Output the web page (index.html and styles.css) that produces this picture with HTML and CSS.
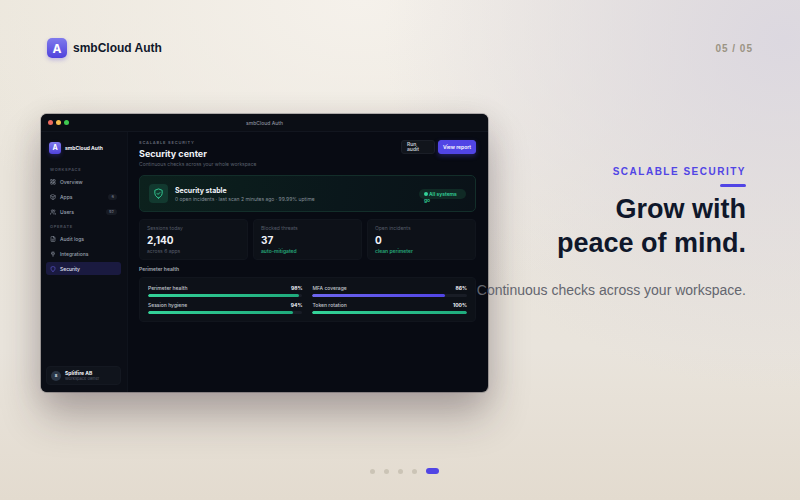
FILE: index.html
```
<!DOCTYPE html>
<html lang="en">
  <head>
    <meta charset="UTF-8">
    <meta name="viewport" content="width=device-width, initial-scale=1">
    <title>smbCloud Auth - Scalable Security</title>
    <link rel="stylesheet" href="styles.css">
  </head>
  <body>
    <header class="top">
      <div class="brand">
        <span class="logo">A</span>
        <span>smbCloud Auth</span>
      </div>
      <span class="counter">05 / 05</span>
    </header>

    <main class="slide">
      <div class="window">
        <div class="titlebar">
          <div class="lights">
            <span class="light red"></span>
            <span class="light yellow"></span>
            <span class="light green"></span>
          </div>
          <span class="window-title">smbCloud Auth</span>
        </div>

        <div class="app">
          <!-- Sidebar -->
          <aside class="sidebar">
            <div class="app-brand">
              <span class="logo logo-small">A</span>
              <span>smbCloud Auth</span>
            </div>

            <nav>
              <h4>Workspace</h4>
              <a href="#overview">
                <svg viewBox="0 0 24 24"><rect x="3" y="3" width="7" height="7" rx="1"/><rect x="14" y="3" width="7" height="7" rx="1"/><rect x="3" y="14" width="7" height="7" rx="1"/><rect x="14" y="14" width="7" height="7" rx="1"/></svg>
                Overview
              </a>
              <a href="#apps">
                <svg viewBox="0 0 24 24"><path d="M12 2l9 5v10l-9 5-9-5V7z"/><path d="M3 7l9 5 9-5M12 12v10"/></svg>
                Apps
                <span class="count">6</span>
              </a>
              <a href="#users">
                <svg viewBox="0 0 24 24"><circle cx="9" cy="7" r="4"/><path d="M2 21v-2a4 4 0 0 1 4-4h6a4 4 0 0 1 4 4v2M16 3a4 4 0 0 1 0 8M22 21v-2a4 4 0 0 0-3-4"/></svg>
                Users
                <span class="count">92</span>
              </a>

              <h4>Operate</h4>
              <a href="#logs">
                <svg viewBox="0 0 24 24"><path d="M14 2H6a2 2 0 0 0-2 2v16a2 2 0 0 0 2 2h12a2 2 0 0 0 2-2V8z"/><path d="M14 2v6h6M8 13h8M8 17h6"/></svg>
                Audit logs
              </a>
              <a href="#integrations">
                <svg viewBox="0 0 24 24"><path d="M12 22v-7M9 8V3M15 8V3M6 8h12v2a6 6 0 0 1-12 0z"/></svg>
                Integrations
              </a>
              <a href="#security" class="active">
                <svg viewBox="0 0 24 24"><path d="M12 22s8-4 8-10V5l-8-3-8 3v7c0 6 8 10 8 10z"/></svg>
                Security
              </a>
            </nav>

            <div class="account">
              <span class="avatar">S</span>
              <div>
                <strong>Splitfire AB</strong>
                <small>Workspace owner</small>
              </div>
            </div>
          </aside>

          <!-- Security center -->
          <section class="content">
            <div class="content-head">
              <div>
                <p class="kicker">Scalable security</p>
                <h2>Security center</h2>
                <p class="muted">Continuous checks across your whole workspace</p>
              </div>
              <div class="actions">
                <button type="button" class="btn">Run audit</button>
                <button type="button" class="btn btn-primary">View report</button>
              </div>
            </div>

            <div class="status">
              <span class="status-icon">
                <svg viewBox="0 0 24 24"><path d="M12 22s8-4 8-10V5l-8-3-8 3v7c0 6 8 10 8 10z"/><path d="M9 12l2 2 4-4"/></svg>
              </span>
              <div>
                <h3>Security stable</h3>
                <p>0 open incidents · last scan 2 minutes ago · 99.99% uptime</p>
              </div>
              <div class="pill"><i></i>All systems go</div>
            </div>

            <div class="stats">
              <div class="card">
                <p class="label">Sessions today</p>
                <p class="value">2,140</p>
                <p class="note">across 6 apps</p>
              </div>
              <div class="card">
                <p class="label">Blocked threats</p>
                <p class="value">37</p>
                <p class="note good">auto-mitigated</p>
              </div>
              <div class="card">
                <p class="label">Open incidents</p>
                <p class="value">0</p>
                <p class="note good">clean perimeter</p>
              </div>
            </div>

            <h4 class="section-title">Perimeter health</h4>
            <div class="card meters">
              <div class="meter">
                <p><span>Perimeter health</span><b>98%</b></p>
                <div class="track"><div class="fill" style="width: 98%"></div></div>
              </div>
              <div class="meter">
                <p><span>MFA coverage</span><b>86%</b></p>
                <div class="track"><div class="fill violet" style="width: 86%"></div></div>
              </div>
              <div class="meter">
                <p><span>Session hygiene</span><b>94%</b></p>
                <div class="track"><div class="fill" style="width: 94%"></div></div>
              </div>
              <div class="meter">
                <p><span>Token rotation</span><b>100%</b></p>
                <div class="track"><div class="fill" style="width: 100%"></div></div>
              </div>
            </div>
          </section>
        </div>
      </div>

      <div class="caption">
        <p class="eyebrow">Scalable security</p>
        <span class="rule"></span>
        <h1>Grow with<br>peace of mind.</h1>
        <p class="lead">Continuous checks across your workspace.</p>
      </div>
    </main>

    <footer class="dots">
      <span></span>
      <span></span>
      <span></span>
      <span></span>
      <span class="current"></span>
    </footer>
  </body>
</html>
```
FILE: styles.css
```
* {
  box-sizing: border-box;
}

h1, h2, h3, h4, p {
  margin: 0;
}

body {
  margin: 0;
  min-height: 100vh;
  display: flex;
  flex-direction: column;
  color: #0f172a;
  font-family: "Liberation Sans", Arial, sans-serif;
  background:
    radial-gradient(ellipse 50% 70% at 98% 8%, #dcd8e0, rgba(220, 216, 224, 0) 100%),
    radial-gradient(ellipse 55% 60% at 45% 0%, #f5f1eb, rgba(245, 241, 235, 0) 100%),
    linear-gradient(180deg, #ebe6db 0%, #e9e4dc 70%, #e3dbcf 100%);
}

/* Header */
.top {
  display: flex;
  align-items: center;
  justify-content: space-between;
  padding: 38px 47px 0;
}

.brand {
  display: flex;
  align-items: center;
  gap: 6px;
  font-size: 12px;
  font-weight: bold;
}

.logo {
  display: flex;
  align-items: center;
  justify-content: center;
  width: 20px;
  height: 20px;
  border-radius: 5px;
  color: #fff;
  font-family: Inter, sans-serif;
  font-size: 12px;
  font-weight: bold;
  background: linear-gradient(180deg, #7f7aec, #4f42dc);
  box-shadow: 0 2px 4px rgba(79, 66, 220, 0.3);
}

.logo-small {
  width: 12px;
  height: 12px;
  border-radius: 3px;
  font-size: 7px;
}

.counter {
  color: #9b9484;
  font-size: 10px;
  font-weight: bold;
  letter-spacing: 0.1em;
}

/* Slide */
.slide {
  display: flex;
  align-items: flex-start;
  margin-top: 56px;
  padding: 0 54px 0 41px;
}

.window {
  flex: 0 0 63.4%;
  display: flex;
  flex-direction: column;
  min-height: 278px;
  overflow: hidden;
  border-radius: 6px;
  background: #080b13;
  color: #f1f3f8;
  font-family: Inter, sans-serif;
  font-size: 5px;
  line-height: 6px;
  box-shadow: 0 0 0 1px rgba(20, 20, 30, 0.25), 0 24px 40px rgba(45, 30, 40, 0.3), 0 4px 30px rgba(45, 30, 40, 0.1);
}

.titlebar {
  display: grid;
  grid-template-columns: 1fr auto 1fr;
  align-items: center;
  height: 18px;
  padding: 0 7px;
  border-bottom: 1px solid #12161f;
  background: #0b0e15;
}

.lights {
  display: flex;
  gap: 3px;
}

.light {
  width: 5px;
  height: 5px;
  border-radius: 50%;
}

.red {
  background: #ed6a5e;
}

.yellow {
  background: #f5bf4f;
}

.green {
  background: #3fc950;
}

.window-title {
  color: #8b909b;
  font-weight: 500;
}

.app {
  flex: 1;
  display: flex;
}

/* Sidebar */
.sidebar {
  flex: 0 0 87px;
  display: flex;
  flex-direction: column;
  padding: 10px 6px 7px 5px;
  border-right: 1px solid #0f131c;
  background: #0b0e16;
}

.app-brand {
  display: flex;
  align-items: center;
  gap: 4px;
  padding-left: 3px;
  font-weight: bold;
}

nav {
  display: flex;
  flex-direction: column;
  gap: 2px;
  margin-top: 13px;
}

nav h4 {
  padding: 0 4px;
  color: #4b515e;
  font-size: 4px;
  font-weight: 600;
  letter-spacing: 0.16em;
  text-transform: uppercase;
}

nav a + h4 {
  margin-top: 4px;
}

nav a {
  display: flex;
  align-items: center;
  gap: 4px;
  height: 13px;
  padding: 0 4px;
  border-radius: 3px;
  color: #9aa1af;
  font-weight: 500;
  text-decoration: none;
}

svg {
  width: 6px;
  height: 6px;
  fill: none;
  stroke: currentColor;
  stroke-width: 2;
  stroke-linecap: round;
  stroke-linejoin: round;
}

nav a.active {
  background: #1a1a40;
  color: #e3e5f5;
}

nav a.active svg {
  color: #6d66ee;
}

.count {
  margin-left: auto;
  padding: 0 3px;
  border-radius: 3px;
  background: #171b24;
  color: #6c7280;
  font-size: 4px;
}

.account {
  display: flex;
  align-items: center;
  gap: 4px;
  height: 19px;
  margin-top: auto;
  padding: 0 4px;
  border: 1px solid #141821;
  border-radius: 4px;
  background: #10141c;
}

.avatar {
  width: 10px;
  height: 10px;
  border-radius: 50%;
  background: #2b3646;
  color: #dfe4ec;
  font-size: 4px;
  font-weight: bold;
  line-height: 10px;
  text-align: center;
}

.account strong,
.account small {
  display: block;
  line-height: 5px;
}

.account small {
  color: #565c69;
  font-size: 4px;
}

/* Main panel */
.content {
  flex: 1;
  padding: 8px 12px 12px 11px;
}

.content-head {
  display: flex;
  justify-content: space-between;
  align-items: flex-start;
}

.kicker {
  color: #646a77;
  font-size: 4px;
  font-weight: 600;
  letter-spacing: 0.2em;
  text-transform: uppercase;
}

.content h2 {
  margin: 2px 0 1px;
  font-size: 9px;
  line-height: 12px;
}

.muted {
  color: #5a606d;
}

.actions {
  display: flex;
  gap: 3px;
}

.btn {
  width: 34px;
  height: 14px;
  padding: 0 12px 0 5px;
  border: 1px solid #1a1e27;
  border-radius: 3px;
  background: #11151c;
  color: #c5c9d2;
  font-family: inherit;
  font-size: 5px;
  font-weight: 600;
  line-height: 5px;
  text-align: left;
  cursor: pointer;
}

.btn-primary {
  width: 38px;
  padding: 0;
  border-color: #5145e5;
  background: #5145e5;
  color: #fff;
  text-align: center;
  white-space: nowrap;
  box-shadow: 0 2px 5px rgba(81, 69, 229, 0.35);
}

.status {
  display: flex;
  align-items: center;
  gap: 7px;
  height: 37px;
  margin-top: 8px;
  padding: 0 9px;
  border: 1px solid #132e2a;
  border-radius: 5px;
  background: linear-gradient(100deg, #0c211d, #0a171b 60%, #0a1218);
}

.status-icon {
  display: flex;
  align-items: center;
  justify-content: center;
  width: 19px;
  height: 19px;
  border-radius: 4px;
  background: #12392f;
  color: #34d399;
}

.status-icon svg {
  width: 11px;
  height: 11px;
}

.status h3 {
  font-size: 7px;
  line-height: 10px;
}

.status p {
  color: #858f98;
}

.pill {
  width: 47px;
  height: 10px;
  margin-left: auto;
  padding: 2px 5px;
  border-radius: 5px;
  background: #102a25;
  color: #34d399;
  font-weight: 600;
}

.pill i {
  display: inline-block;
  width: 4px;
  height: 4px;
  margin-right: 1px;
  border-radius: 50%;
  background: #34d399;
}

.card {
  border: 1px solid #11151d;
  border-radius: 4px;
  background: #0d1118;
}

.stats {
  display: grid;
  grid-template-columns: repeat(3, 1fr);
  gap: 5px;
  margin-top: 7px;
}

.stats .card {
  padding: 5px 7px;
}

.label,
.note {
  color: #565c69;
}

.value {
  margin: 3px 0 2px;
  font-size: 10px;
  font-weight: bold;
  line-height: 12px;
}

.good {
  color: #26a678;
  font-weight: 600;
}

.section-title {
  margin: 6px 0 5px;
  color: #a6abb6;
  font-weight: 600;
}

.meters {
  display: grid;
  grid-template-columns: 1fr 1fr;
  gap: 5px 10px;
  padding: 7px 8px;
}

.meter p {
  display: flex;
  justify-content: space-between;
  margin-bottom: 3px;
  color: #c3c7d0;
  font-weight: 500;
}

.meter b {
  color: #f1f3f8;
}

.track {
  height: 3px;
  overflow: hidden;
  border-radius: 2px;
  background: #191d26;
}

.fill {
  height: 100%;
  border-radius: 2px;
  background: linear-gradient(90deg, #34d399, #1fab7c);
}

.violet {
  background: linear-gradient(90deg, #6d66ee, #5145e5);
}

/* Caption next to the window */
.caption {
  position: relative;
  flex: 1;
  display: flex;
  flex-direction: column;
  align-items: flex-end;
  min-width: 0;
  padding-top: 51px;
  text-align: right;
}

.eyebrow {
  color: #5145e5;
  font-size: 10px;
  font-weight: bold;
  line-height: 14px;
  letter-spacing: 0.15em;
  text-transform: uppercase;
}

.rule {
  width: 26px;
  height: 3px;
  margin: 5px 0;
  border-radius: 2px;
  background: #5145e5;
}

h1 {
  font-size: 27px;
  line-height: 34px;
  white-space: nowrap;
}

.lead {
  margin-top: 21px;
  color: #64666f;
  font-size: 14px;
  line-height: 18px;
  white-space: nowrap;
}

/* Pagination */
.dots {
  display: flex;
  align-items: center;
  justify-content: center;
  gap: 9px;
  margin-top: auto;
  padding: 0 0 26px 8px;
}

.dots span {
  width: 5px;
  height: 5px;
  border-radius: 3px;
  background: #cbc4b6;
}

.dots .current {
  width: 13px;
  height: 6px;
  background: #5145e5;
}
```
